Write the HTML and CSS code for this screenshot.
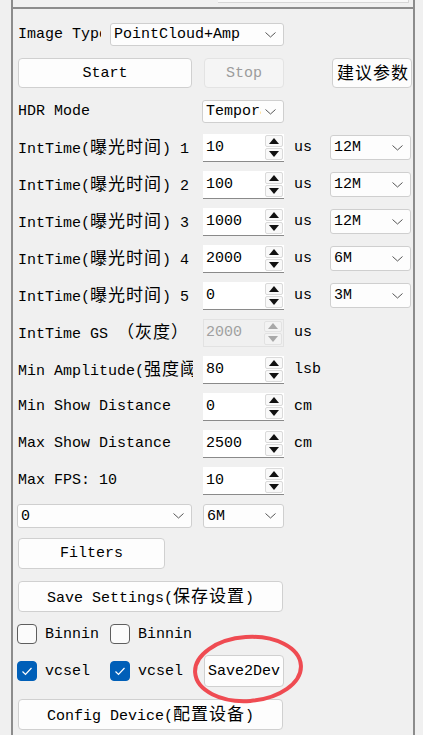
FILE: index.html
```html
<!DOCTYPE html>
<html lang="zh-CN">
<head>
	<meta charset="UTF-8">
	<title>ToF Viewer</title>
	<link rel="stylesheet" href="styles.css">
</head>
<body>
	<div class="frame">
		<div class="top-strip"><div class="prev-box"></div></div>
		<div class="panel">
			<!-- 图像类型 -->
			<div class="row row-type">
				<span class="label label-type">Image Type</span>
				<div class="combo combo-type"><span class="combo-text">PointCloud+Amp</span><svg class="chev" width="11" height="6" viewBox="0 0 11 6"><polyline points="0.5,0.5 5.5,5 10.5,0.5"/></svg></div>
			</div>
			<!-- 开始/停止 -->
			<div class="row row-btns">
				<button class="btn btn-start">Start</button>
				<button class="btn btn-stop" disabled>Stop</button>
				<button class="btn btn-advice"><span class="zh">建议参数</span></button>
			</div>
			<div class="row row-hdr">
				<span class="label">HDR Mode</span>
				<div class="combo combo-hdr"><span class="combo-text">Temporal</span><svg class="chev" width="11" height="6" viewBox="0 0 11 6"><polyline points="0.5,0.5 5.5,5 10.5,0.5"/></svg></div>
			</div>

			<!-- 曝光时间 -->
			<div class="row row-spin">
				<span class="label">IntTime(<span class="zh">曝光时间</span>) 1</span>
				<div class="spin"><span class="spin-val">10</span><div class="spin-btns"><div class="spin-btn"><i class="up"></i></div><div class="spin-btn"><i class="down"></i></div></div></div>
				<span class="unit">us</span>
				<div class="combo combo-freq"><span class="combo-text">12M</span><svg class="chev" width="11" height="6" viewBox="0 0 11 6"><polyline points="0.5,0.5 5.5,5 10.5,0.5"/></svg></div>
			</div>
			<div class="row row-spin">
				<span class="label">IntTime(<span class="zh">曝光时间</span>) 2</span>
				<div class="spin"><span class="spin-val">100</span><div class="spin-btns"><div class="spin-btn"><i class="up"></i></div><div class="spin-btn"><i class="down"></i></div></div></div>
				<span class="unit">us</span>
				<div class="combo combo-freq"><span class="combo-text">12M</span><svg class="chev" width="11" height="6" viewBox="0 0 11 6"><polyline points="0.5,0.5 5.5,5 10.5,0.5"/></svg></div>
			</div>
			<div class="row row-spin">
				<span class="label">IntTime(<span class="zh">曝光时间</span>) 3</span>
				<div class="spin"><span class="spin-val">1000</span><div class="spin-btns"><div class="spin-btn"><i class="up"></i></div><div class="spin-btn"><i class="down"></i></div></div></div>
				<span class="unit">us</span>
				<div class="combo combo-freq"><span class="combo-text">12M</span><svg class="chev" width="11" height="6" viewBox="0 0 11 6"><polyline points="0.5,0.5 5.5,5 10.5,0.5"/></svg></div>
			</div>
			<div class="row row-spin">
				<span class="label">IntTime(<span class="zh">曝光时间</span>) 4</span>
				<div class="spin"><span class="spin-val">2000</span><div class="spin-btns"><div class="spin-btn"><i class="up"></i></div><div class="spin-btn"><i class="down"></i></div></div></div>
				<span class="unit">us</span>
				<div class="combo combo-freq"><span class="combo-text">6M</span><svg class="chev" width="11" height="6" viewBox="0 0 11 6"><polyline points="0.5,0.5 5.5,5 10.5,0.5"/></svg></div>
			</div>
			<div class="row row-spin">
				<span class="label">IntTime(<span class="zh">曝光时间</span>) 5</span>
				<div class="spin"><span class="spin-val">0</span><div class="spin-btns"><div class="spin-btn"><i class="up"></i></div><div class="spin-btn"><i class="down"></i></div></div></div>
				<span class="unit">us</span>
				<div class="combo combo-freq"><span class="combo-text">3M</span><svg class="chev" width="11" height="6" viewBox="0 0 11 6"><polyline points="0.5,0.5 5.5,5 10.5,0.5"/></svg></div>
			</div>
			<div class="row row-spin">
				<span class="label">IntTime GS <span class="zh">（灰度）</span></span>
				<div class="spin spin-disabled"><span class="spin-val">2000</span><div class="spin-btns"><div class="spin-btn"><i class="up"></i></div><div class="spin-btn"><i class="down"></i></div></div></div>
				<span class="unit">us</span>
			</div>

			<!-- 距离/幅度 -->
			<div class="row row-spin">
				<span class="label">Min Amplitude(<span class="zh">强度阈值</span>)</span>
				<div class="spin"><span class="spin-val">80</span><div class="spin-btns"><div class="spin-btn"><i class="up"></i></div><div class="spin-btn"><i class="down"></i></div></div></div>
				<span class="unit">lsb</span>
			</div>
			<div class="row row-spin">
				<span class="label">Min Show Distance</span>
				<div class="spin"><span class="spin-val">0</span><div class="spin-btns"><div class="spin-btn"><i class="up"></i></div><div class="spin-btn"><i class="down"></i></div></div></div>
				<span class="unit">cm</span>
			</div>
			<div class="row row-spin">
				<span class="label">Max Show Distance</span>
				<div class="spin"><span class="spin-val">2500</span><div class="spin-btns"><div class="spin-btn"><i class="up"></i></div><div class="spin-btn"><i class="down"></i></div></div></div>
				<span class="unit">cm</span>
			</div>
			<div class="row row-spin">
				<span class="label">Max FPS: 10</span>
				<div class="spin"><span class="spin-val">10</span><div class="spin-btns"><div class="spin-btn"><i class="up"></i></div><div class="spin-btn"><i class="down"></i></div></div></div>
			</div>

			<div class="row row-combos">
				<div class="combo combo-wide"><span class="combo-text">0</span><svg class="chev" width="11" height="6" viewBox="0 0 11 6"><polyline points="0.5,0.5 5.5,5 10.5,0.5"/></svg></div>
				<div class="combo combo-mod"><span class="combo-text">6M</span><svg class="chev" width="11" height="6" viewBox="0 0 11 6"><polyline points="0.5,0.5 5.5,5 10.5,0.5"/></svg></div>
			</div>
			<div class="row row-filters">
				<button class="btn btn-filters">Filters</button>
			</div>
			<div class="row row-save">
				<button class="btn btn-long">Save Settings(<span class="zh">保存设置</span>)</button>
			</div>

			<!-- 复选框 -->
			<div class="row row-checks">
				<label class="check"><span class="box"></span>Binnin</label>
				<label class="check"><span class="box"></span>Binnin</label>
			</div>
			<div class="row row-vcsel">
				<label class="check"><span class="box on"><svg width="20" height="20" viewBox="0 0 20 20"><polyline points="5.5,10.5 8.5,13.5 14.5,7"/></svg></span>vcsel</label>
				<label class="check"><span class="box on"><svg width="20" height="20" viewBox="0 0 20 20"><polyline points="5.5,10.5 8.5,13.5 14.5,7"/></svg></span>vcsel</label>
				<button class="btn btn-save2dev">Save2Dev</button>
				<svg class="mark" width="116" height="74" viewBox="0 0 116 74"><ellipse cx="57" cy="37" rx="53" ry="32" transform="rotate(-4 57 37)"/></svg>
			</div>
			<div class="row row-config">
				<button class="btn btn-long">Config Device(<span class="zh">配置设备</span>)</button>
			</div>
		</div>
	</div>
</body>
</html>
```

FILE: styles.css
```css
body{
	margin: 0;
	background: #f0f0f0;
	font-family: "Liberation Mono", "Noto Sans CJK SC", monospace;
	font-size: 15px;
	color: #000;
	overflow: hidden;
}
.zh{
	font-family: "Noto Sans CJK SC", sans-serif;
	font-size: 17px;
	letter-spacing: 1px;
	line-height: 1;
}
.frame{
	margin-left: 11px;
	width: 404px;
	height: 735px;
	box-sizing: border-box;
	border-left: 2px solid #8c8c8c;
	border-right: 2px solid #8c8c8c;
}
.top-strip{
	height: 7px;
	position: relative;
}
.prev-box{
	margin-left: 205px;
	width: 190px;
	height: 2px;
	background: #f8f8f8;
	border-right: 1px solid #d6d6d6;
	border-bottom: 1px solid #d6d6d6;
}
.panel{
	border-top: 2px solid #8c8c8c;
	padding-left: 4px;
}
.row{
	display: flex;
	align-items: center;
}
.label{
	width: 176px;
	margin-right: 10px;
	white-space: nowrap;
	overflow: hidden;
	padding-left: 1px;
	box-sizing: border-box;
}

/* 下拉框 */
.combo{
	display: flex;
	align-items: center;
	box-sizing: border-box;
	height: 24px;
	background: #fdfdfd;
	border: 1px solid #cfcfcf;
	border-radius: 3px;
	padding: 0 7px 0 3px;
}
.combo-text{
	flex: 1;
	white-space: nowrap;
	overflow: hidden;
}
.chev{
	flex: none;
	margin-left: 4px;
}
.chev polyline{
	fill: none;
	stroke: #555;
	stroke-width: 1;
}
.row-type{
	margin-top: 14px;
}
.label-type{
	width: 84px;
	margin-right: 9px;
}
.combo-type{
	width: 174px;
	height: 23px;
}
.combo-hdr{
	width: 82px;
	height: 23px;
	margin-left: -1px;
}
.combo-freq{
	width: 81px;
	height: 25px;
}

/* 按钮 */
.btn{
	font: inherit;
	color: #000;
	box-sizing: border-box;
	background: #fdfdfd;
	border: 1px solid #d0d0d0;
	border-radius: 4px;
	padding: 0;
	height: 31px;
	white-space: nowrap;
}
.btn[disabled]{
	color: #9c9c9c;
	background: #f5f5f5;
	border-color: #e3e3e3;
}
.row-btns{
	margin-top: 12px;
}
.btn-start{
	width: 174px;
	height: 30px;
	margin-left: 1px;
}
.btn-stop{
	width: 80px;
	height: 30px;
	margin-left: 12px;
}
.btn-advice{
	width: 80px;
	height: 30px;
	margin-left: 48px;
	padding-left: 2px;
}
.row-hdr{
	margin-top: 12px;
}

/* 数值框 */
.row-spin{
	height: 37px;
}
.row-hdr + .row-spin{
	margin-top: 6px;
}
.spin{
	display: flex;
	width: 81px;
	height: 28px;
	box-sizing: border-box;
	background: #fff;
	border-bottom: 1px solid #8a8a8a;
}
.spin-val{
	flex: 1;
	padding-left: 3px;
	line-height: 27px;
}
.spin-btns{
	width: 19px;
	display: flex;
	flex-direction: column;
	gap: 1px;
	padding: 1px 1px 1px 0;
	box-sizing: border-box;
}
.spin-btn{
	flex: 1;
	display: flex;
	align-items: center;
	justify-content: center;
	background: #f9f9f9;
	border: 1px solid #dadada;
	border-radius: 2px;
}
.spin-btn i{
	width: 0;
	height: 0;
	border-left: 5px solid transparent;
	border-right: 5px solid transparent;
}
.spin-btn .up{
	border-bottom: 6px solid #111;
}
.spin-btn .down{
	border-top: 6px solid #111;
}
.spin-disabled{
	background: #f0f0f0;
	border: 1px solid #e2e2e2;
	color: #a0a0a0;
}
.spin-disabled .spin-val{
	line-height: 26px;
	padding-left: 2px;
}
.spin-disabled .spin-btn{
	background: #f3f3f3;
	border-color: #e2e2e2;
}
.spin-disabled .up{
	border-bottom-color: #a8a8a8;
}
.spin-disabled .down{
	border-top-color: #a8a8a8;
}
.unit{
	width: 36px;
	margin-left: 10px;
}

.row-combos{
	margin-top: 5px;
}
.combo-wide{
	width: 175px;
}
.combo-mod{
	width: 81px;
	margin-left: 11px;
}
.row-filters{
	margin-top: 10px;
}
.btn-filters{
	width: 147px;
	margin-left: 1px;
}
.row-save{
	margin-top: 12px;
}
.btn-long{
	width: 265px;
	margin-left: 1px;
}

/* 复选框 */
.row-checks{
	margin-top: 12px;
	height: 20px;
}
.check{
	display: flex;
	align-items: center;
	width: 93px;
}
.box{
	width: 20px;
	height: 20px;
	box-sizing: border-box;
	border: 1px solid #5e5e5e;
	border-radius: 4px;
	background: #fbfbfb;
	margin-right: 8px;
}
.box.on{
	background: #005fb8;
	border-color: #005fb8;
}
.box svg{
	display: block;
	margin: -1px;
}
.box polyline{
	fill: none;
	stroke: #fff;
	stroke-width: 1.2;
}
.row-vcsel{
	position: relative;
	margin-top: 11px;
}
.btn-save2dev{
	width: 80px;
	height: 32px;
	margin-left: 1px;
}
.mark{
	position: absolute;
	left: 174px;
	top: -23px;
}
.mark ellipse{
	fill: none;
	stroke: #ef4b52;
	stroke-width: 4;
}
.row-config{
	margin-top: 12px;
}
```
